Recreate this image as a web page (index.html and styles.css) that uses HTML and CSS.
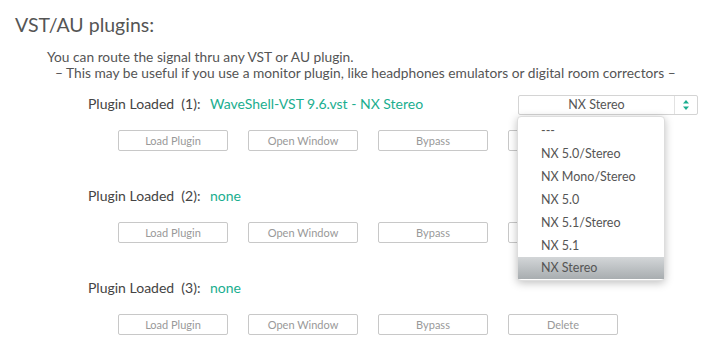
FILE: index.html
```html
<!DOCTYPE html>
<html lang="en">
<head>
  <meta charset="UTF-8">
  <meta name="viewport" content="width=device-width, initial-scale=1.0">
  <title>VST/AU plugins</title>
  <link rel="stylesheet" href="styles.css">
</head>
<body>
  <h2 class="title">VST/AU plugins:</h2>

  <div class="intro">
    <p>You can route the signal thru any VST or AU plugin.</p>
    <p class="note">– This may be useful if you use a monitor plugin, like headphones emulators or digital room correctors –</p>
  </div>

  <div class="slot">
    <div class="slot-head">
      <span class="label">Plugin Loaded&nbsp; (1):</span>
      <span class="value">WaveShell-VST 9.6.vst - NX Stereo</span>
      <div class="select">
        <span class="select-text">NX Stereo</span>
        <span class="select-arrows">
          <svg width="8" height="12" viewBox="0 0 8 12">
            <path d="M4 1 L7 4.5 L1 4.5 Z" fill="#1aae8f"/>
            <path d="M4 11 L7 7.5 L1 7.5 Z" fill="#1aae8f"/>
          </svg>
        </span>
        <ul class="menu">
          <li>---</li>
          <li>NX 5.0/Stereo</li>
          <li>NX Mono/Stereo</li>
          <li>NX 5.0</li>
          <li>NX 5.1/Stereo</li>
          <li>NX 5.1</li>
          <li class="active">NX Stereo</li>
        </ul>
      </div>
    </div>
    <div class="buttons">
      <button>Load Plugin</button>
      <button>Open Window</button>
      <button>Bypass</button>
      <button>Delete</button>
    </div>
  </div>

  <div class="slot">
    <div class="slot-head">
      <span class="label">Plugin Loaded&nbsp; (2):</span>
      <span class="value">none</span>
    </div>
    <div class="buttons">
      <button>Load Plugin</button>
      <button>Open Window</button>
      <button>Bypass</button>
      <button>Delete</button>
    </div>
  </div>

  <div class="slot">
    <div class="slot-head">
      <span class="label">Plugin Loaded&nbsp; (3):</span>
      <span class="value">none</span>
    </div>
    <div class="buttons">
      <button>Load Plugin</button>
      <button>Open Window</button>
      <button>Bypass</button>
      <button>Delete</button>
    </div>
  </div>
</body>
</html>
```

FILE: styles.css
```css
body {
  margin: 0;
  background-color: #fff;
  font-family: 'Lato', 'Open Sans', sans-serif;
  color: #555;
}

.title {
  margin: 0;
  padding: 12px 0 0 15px;
  font-size: 19.5px;
  font-weight: 400;
  line-height: 26px;
  color: #555;
}

.intro {
  margin: 11px 0 13px 47px;
  font-size: 13.75px;
  line-height: 15.5px;
}

.intro p {
  margin: 0;
}

.intro .note {
  padding-left: 8px;
}

.slot {
  padding-left: 88px;
  padding-right: 28px;
}

.slot-head {
  display: flex;
  align-items: center;
  height: 20px;
  font-size: 14px;
  color: #444;
}

.label {
  width: 122px;
}

.value {
  color: #1aae8f;
}

.select {
  position: relative;
  display: flex;
  width: 180px;
  height: 20px;
  margin-left: auto;
  margin-top: 4px;
  box-sizing: border-box;
  border: 1px solid #d4d4d4;
  border-radius: 2px;
  font-size: 12.5px;
  color: #555;
}

.select-text {
  flex: 1;
  text-align: center;
  line-height: 18px;
}

.select-arrows {
  display: flex;
  align-items: center;
  justify-content: center;
  width: 22px;
  border-left: 1px solid #e2e2e2;
}

.menu {
  position: absolute;
  top: 20px;
  left: -2px;
  width: 146px;
  margin: 0;
  padding: 2px 0 1px;
  list-style: none;
  background-color: #fff;
  border: 1px solid #ddd;
  border-radius: 4px;
  box-shadow: 0 2px 8px rgba(0, 0, 0, 0.25);
  z-index: 10;
}

.menu li {
  height: 23px;
  line-height: 23px;
  padding-left: 23px;
  color: #555;
}

.menu li.active {
  height: 22px;
  line-height: 22px;
  background: linear-gradient(#d3d6d8, #a8adb0);
}

.buttons {
  display: flex;
  gap: 20px;
  margin-top: 17px;
  padding-left: 30px;
  padding-bottom: 34px;
}

.buttons button {
  width: 110px;
  height: 21px;
  padding: 0;
  background-color: #fff;
  border: 1px solid #c8c8c8;
  border-radius: 2px;
  font-family: 'Lato', 'Open Sans', sans-serif;
  font-size: 11px;
  color: #999;
}
```
